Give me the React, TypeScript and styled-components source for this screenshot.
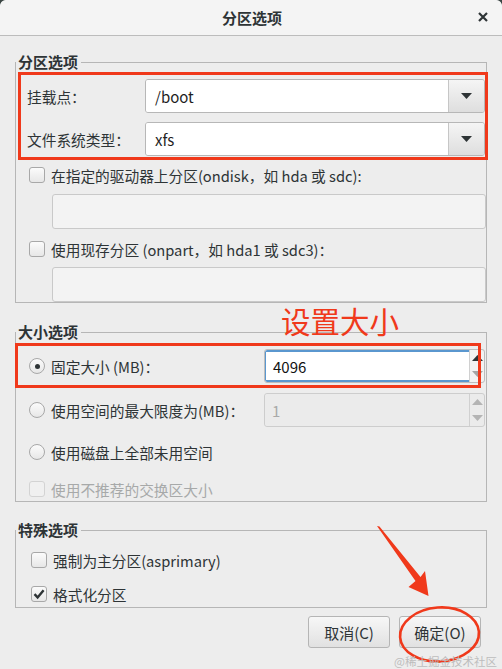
import React from 'react';
import styled, { createGlobalStyle } from 'styled-components';

const GlobalStyle = createGlobalStyle`
  html, body {
    margin: 0;
    padding: 0;
    background: #3b4644;
  }
  body {
    font-family: "Noto Sans CJK SC", "Noto Sans", sans-serif;
    color: #2e3436;
  }
`;

const RED = '#f0391b';

export default function App() {
  return (
    <>
      <GlobalStyle />
      <Window>
        <TitleBar>
          <Title>分区选项</Title>
          <Close>
            <svg width="10" height="10" viewBox="0 0 10 10">
              <path d="M1 1L9 9M9 1L1 9" stroke="#2e3436" strokeWidth="2.2" />
            </svg>
          </Close>
        </TitleBar>

        <Body>
          <Group>
            <Legend>分区选项</Legend>
            <Highlight $top={0} $right={-2} $bottom={0} $left={2}>
              <FieldRows>
                <FieldRow>
                  <FieldLabel>挂载点：</FieldLabel>
                  <Combo value="/boot" />
                </FieldRow>
                <FieldRow>
                  <FieldLabel>文件系统类型：</FieldLabel>
                  <Combo value="xfs" />
                </FieldRow>
              </FieldRows>
            </Highlight>
            <CheckRow $top={5} $indent={13}>
              <Check />
              <span>在指定的驱动器上分区(ondisk，如 hda 或 sdc):</span>
            </CheckRow>
            <Entry $top={9} />
            <CheckRow $top={10} $indent={13}>
              <Check />
              <span>使用现存分区 (onpart，如 hda1 或 sdc3)：</span>
            </CheckRow>
            <Entry $top={8} />
          </Group>

          <Group $top={19}>
            <Legend>大小选项</Legend>
            <Highlight $top={1} $right={5} $bottom={0} $left={-1}>
              <SizeRow $top={7} $bottom={5}>
                <RadioLabel>
                  <Radio $on />
                  <span>固定大小 (MB)：</span>
                </RadioLabel>
                <Spin value="4096" focused />
              </SizeRow>
            </Highlight>
            <SizeRow>
              <RadioLabel>
                <Radio />
                <span>使用空间的最大限度为(MB)：</span>
              </RadioLabel>
              <Spin value="1" disabled />
            </SizeRow>
            <CheckRow $top={15} $indent={13}>
              <Radio />
              <span>使用磁盘上全部未用空间</span>
            </CheckRow>
            <CheckRow $top={17} $indent={13} $muted>
              <Check disabled />
              <span>使用不推荐的交换区大小</span>
            </CheckRow>
            <Spacer $h={2} />
          </Group>

          <Group $top={18}>
            <Legend>特殊选项</Legend>
            <CheckRow $top={10} $indent={15}>
              <Check />
              <span>强制为主分区(asprimary)</span>
            </CheckRow>
            <CheckRow $top={14} $indent={15}>
              <Check checked />
              <span>格式化分区</span>
            </CheckRow>
            <Spacer $h={3} />
          </Group>

          <ButtonBar>
            <Button>取消(C)</Button>
            <Button>确定(O)</Button>
          </ButtonBar>
        </Body>

        <Marks width="502" height="669" viewBox="0 0 502 669">
          <polygon
            points="377,526 379.5,526.5 420.5,577 425,571 428.5,596 408.5,587 415.5,581"
            fill={RED}
          />
          <ellipse
            cx="439.5"
            cy="634.5"
            rx="39.5"
            ry="27"
            fill="none"
            stroke={RED}
            strokeWidth="2.6"
            transform="rotate(-4 439.5 634.5)"
          />
        </Marks>
        <Note>设置大小</Note>
        <Watermark>@稀土掘金技术社区</Watermark>
      </Window>
    </>
  );
}

function Check({ checked, disabled }: { checked?: boolean; disabled?: boolean }) {
  return (
    <CheckBox $disabled={disabled}>
      {checked && (
        <svg width="14" height="14" viewBox="0 0 14 14">
          <path d="M2.5 7.2L5.6 10.4L11.6 3.2" stroke="#2e3436" strokeWidth="2.4" fill="none" />
        </svg>
      )}
    </CheckBox>
  );
}

function Combo({ value }: { value: string }) {
  return (
    <ComboBox>
      <ComboText>{value}</ComboText>
      <ComboButton>
        <svg width="11" height="6" viewBox="0 0 11 6">
          <path d="M0 0H11L5.5 6Z" fill="#2e3436" />
        </svg>
      </ComboButton>
    </ComboBox>
  );
}

function Spin({ value, focused, disabled }: { value: string; focused?: boolean; disabled?: boolean }) {
  const up = disabled ? '#b4b4b4' : '#2e3436';
  const down = disabled ? '#b4b4b4' : '#a4a4a4';
  return (
    <SpinBox $disabled={disabled}>
      <SpinText $focused={focused} $disabled={disabled}>
        {value}
      </SpinText>
      <SpinButtons>
        <SpinArrow>
          <svg width="11" height="6" viewBox="0 0 11 6">
            <path d="M0 6H11L5.5 0Z" fill={up} />
          </svg>
        </SpinArrow>
        <SpinArrow>
          <svg width="11" height="6" viewBox="0 0 11 6">
            <path d="M0 0H11L5.5 6Z" fill={down} />
          </svg>
        </SpinArrow>
      </SpinButtons>
    </SpinBox>
  );
}

const Window = styled.div`
  position: relative;
  width: 502px;
  height: 669px;
  overflow: hidden;
  background: #ededed;
  border-radius: 6px 6px 0 0;
  font-size: 14.7px;
`;

const TitleBar = styled.div`
  position: relative;
  height: 35px;
  display: flex;
  align-items: center;
  justify-content: center;
  background: #f4f4f4;
  border-bottom: 1px solid #bcbcbc;
  border-radius: 6px 6px 0 0;
`;

const Title = styled.div`
  font-weight: 700;
  font-size: 15px;
  margin-left: 2px;
`;

const Close = styled.div`
  position: absolute;
  right: 14px;
  top: 12px;
  display: flex;
`;

const Body = styled.div`
  padding: 16px 15px 0;
`;

const Group = styled.fieldset<{ $top?: number }>`
  margin: ${(p) => p.$top ?? 0}px 0 0;
  padding: 0;
  min-width: 0;
  border: 1px solid #b6b6b6;
`;

const Legend = styled.legend`
  padding: 0 3px 0 2px;
  font-weight: 700;
  font-size: 15px;
  line-height: 20px;
`;

const Highlight = styled.div<{ $top: number; $right: number; $bottom: number; $left: number }>`
  position: relative;

  &::after {
    content: '';
    position: absolute;
    top: ${(p) => p.$top}px;
    right: ${(p) => p.$right}px;
    bottom: ${(p) => p.$bottom}px;
    left: ${(p) => p.$left}px;
    border: 3px solid ${RED};
    pointer-events: none;
  }
`;

const FieldRows = styled.div`
  display: flex;
  flex-direction: column;
  gap: 9px;
  padding: 7px 1px 4px 0;
`;

const FieldRow = styled.div`
  display: grid;
  grid-template-columns: 129px 1fr;
  align-items: center;
`;

const FieldLabel = styled.div`
  padding-left: 11px;
`;

const ComboBox = styled.div`
  display: flex;
  height: 34px;
  box-sizing: border-box;
  border: 1px solid #b7b7b7;
  border-radius: 3px;
  overflow: hidden;
`;

const ComboText = styled.div`
  flex: 1;
  display: flex;
  align-items: center;
  padding-left: 9px;
  background: #ffffff;
  font-size: 15px;
  color: #1f1f1f;
`;

const ComboButton = styled.div`
  width: 35px;
  display: flex;
  align-items: center;
  justify-content: center;
  border-left: 1px solid #c6c6c6;
  background: linear-gradient(#f5f5f5, #dedede);
`;

const CheckRow = styled.div<{ $top: number; $indent: number; $muted?: boolean }>`
  display: flex;
  align-items: center;
  gap: 6px;
  height: 20px;
  margin-top: ${(p) => p.$top}px;
  padding-left: ${(p) => p.$indent}px;
  color: ${(p) => (p.$muted ? '#a7a9a9' : '#2e3436')};
  white-space: nowrap;
`;

const CheckBox = styled.span<{ $disabled?: boolean }>`
  width: 16px;
  height: 16px;
  box-sizing: border-box;
  flex: none;
  display: flex;
  align-items: center;
  justify-content: center;
  border: 1px solid ${(p) => (p.$disabled ? '#d3d3d3' : '#a8a8a8')};
  border-radius: 3px;
  background: ${(p) => (p.$disabled ? '#f0f0f0' : 'linear-gradient(#fbfbfb, #e7e7e7)')};
`;

const Radio = styled.span<{ $on?: boolean }>`
  position: relative;
  width: 16px;
  height: 16px;
  box-sizing: border-box;
  flex: none;
  border: 1px solid #a8a8a8;
  border-radius: 50%;
  background: linear-gradient(#fbfbfb, #e7e7e7);

  &::after {
    content: '';
    display: ${(p) => (p.$on ? 'block' : 'none')};
    position: absolute;
    left: 4.5px;
    top: 4.5px;
    width: 5px;
    height: 5px;
    border-radius: 50%;
    background: #2e3436;
  }
`;

const Entry = styled.div<{ $top: number }>`
  height: 35px;
  box-sizing: border-box;
  margin: ${(p) => p.$top}px 0 0 36px;
  border: 1px solid #c9c9c9;
  border-radius: 3px;
  background: #f3f3f3;
`;

const SizeRow = styled.div<{ $top?: number; $bottom?: number }>`
  display: grid;
  grid-template-columns: 248px 1fr;
  align-items: center;
  padding: ${(p) => p.$top ?? 5}px 1px ${(p) => p.$bottom ?? 0}px 0;
`;

const RadioLabel = styled.div`
  display: flex;
  align-items: center;
  gap: 6px;
  padding-left: 13px;
  white-space: nowrap;
`;

const SpinBox = styled.div<{ $disabled?: boolean }>`
  display: flex;
  height: 34px;
  box-sizing: border-box;
  border: 1px solid ${(p) => (p.$disabled ? '#cdcdcd' : '#bdbdbd')};
  border-radius: 3px;
  overflow: hidden;
  background: ${(p) => (p.$disabled ? '#ebebeb' : '#f2f2f2')};
`;

const SpinText = styled.div<{ $focused?: boolean; $disabled?: boolean }>`
  flex: 1;
  display: flex;
  align-items: center;
  padding-left: 7px;
  font-size: 15px;
  color: ${(p) => (p.$disabled ? '#a9a9a9' : '#111111')};
  background: ${(p) => (p.$disabled ? '#ebebeb' : '#ffffff')};
  border: ${(p) => (p.$focused ? '2px solid #5a97cf' : 'none')};
  border-left-width: ${(p) => (p.$focused ? '1px' : '0')};
  border-right: none;
  border-radius: 2px 0 0 2px;
`;

const SpinButtons = styled.div`
  width: 14px;
  display: flex;
  flex-direction: column;
  border-left: 1px solid #d0d0d0;
`;

const SpinArrow = styled.div`
  flex: 1;
  display: flex;
  align-items: center;
  justify-content: center;
`;

const Spacer = styled.div<{ $h: number }>`
  height: ${(p) => p.$h}px;
`;

const ButtonBar = styled.div`
  display: flex;
  justify-content: flex-end;
  gap: 9px;
  margin-top: 8px;
  padding-right: 6px;
`;

const Button = styled.button`
  width: 82px;
  height: 32px;
  padding: 0;
  border: 1px solid #b5b5b5;
  border-radius: 3px;
  background: linear-gradient(#f7f7f7, #e1e1e1);
  font-family: inherit;
  font-size: 15px;
  color: #2e3436;
`;

const Marks = styled.svg`
  position: absolute;
  left: 0;
  top: 0;
  pointer-events: none;
`;

const Note = styled.div`
  position: absolute;
  left: 281px;
  top: 304px;
  font-size: 29.5px;
  line-height: 32px;
  color: ${RED};
  white-space: nowrap;
`;

const Watermark = styled.div`
  position: absolute;
  right: 5px;
  bottom: 1px;
  font-size: 11.5px;
  line-height: 14px;
  color: #bdbdbd;
  white-space: nowrap;
`;
